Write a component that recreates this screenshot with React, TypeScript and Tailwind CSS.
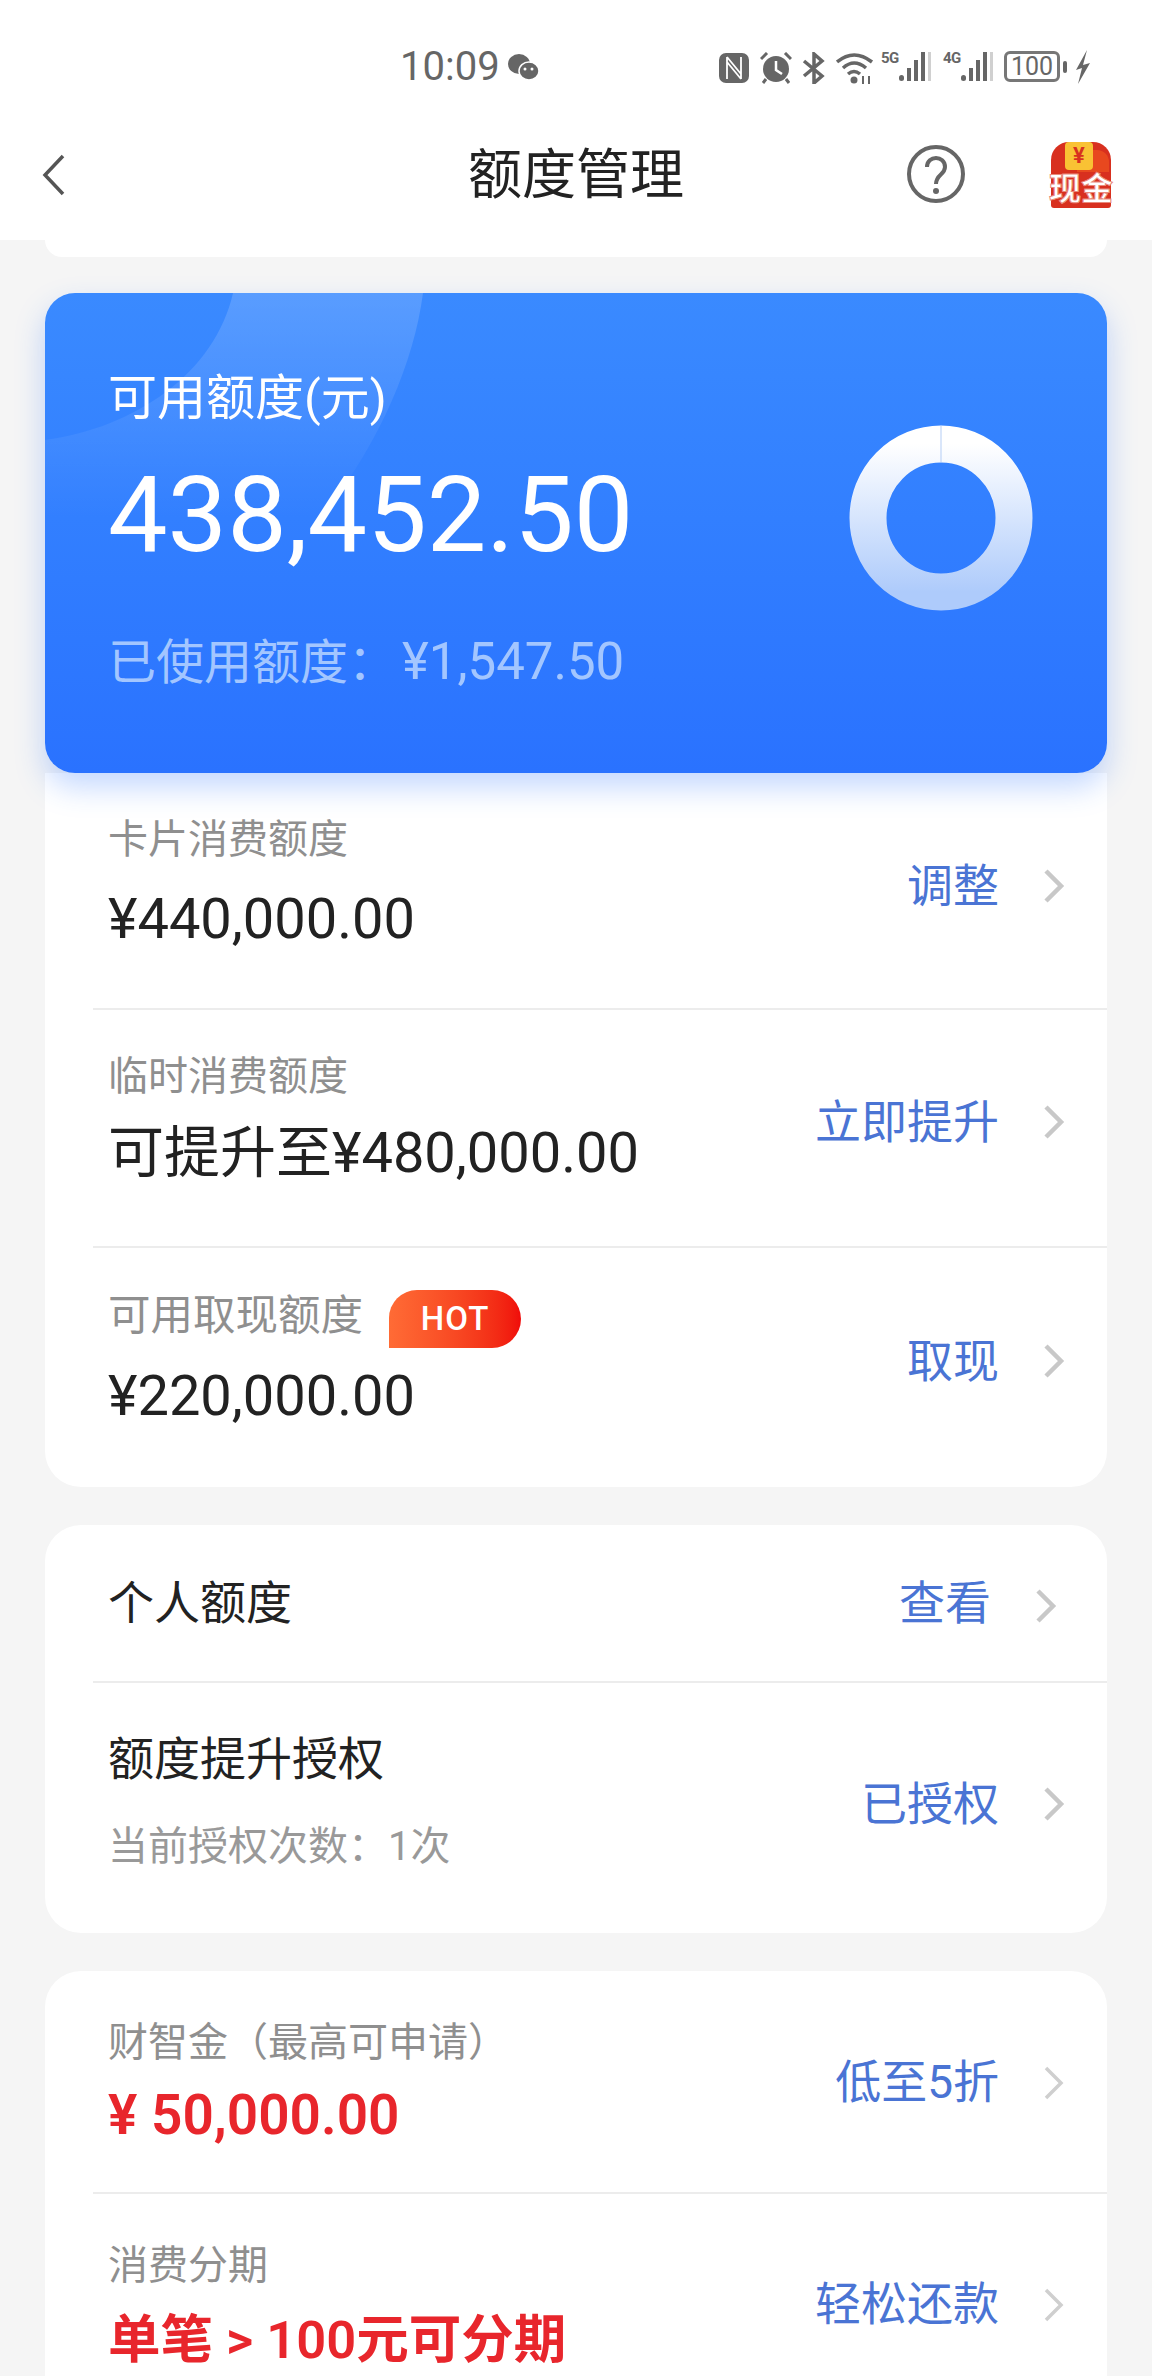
import React from "react";

const cjk = { fontFamily: '"Roboto","Noto Sans CJK SC",sans-serif' };

function Chevron({ className = "", thin }: { className?: string; thin?: boolean }) {
  return (
    <svg viewBox="0 0 22 34" className={"w-[22px] h-[34px] " + className} fill="none">
      <path d="M3 2 L18 17 L3 32" stroke={thin ? "#cfcfcf" : "#c8c8c8"} strokeWidth={thin ? 3.5 : 4.5} />
    </svg>
  );
}

function Action({ text, chevronClass = "mr-[42px]", wrap = "", thin }: { text: string; chevronClass?: string; wrap?: string; thin?: boolean }) {
  return (
    <div className={"flex items-center shrink-0 " + wrap}>
      <span className="text-[46px] leading-[60px] text-[#4a74d4]">{text}</span>
      <Chevron thin={thin} className={"ml-[44px] " + chevronClass} />
    </div>
  );
}

function Divider() {
  return <div className="h-[2px] ml-[48px] bg-[#ececec]" />;
}

type RowProps = {
  label: string;
  value: string;
  action: string;
  hot?: boolean;
  height: string;
  pt: string;
  valueClass: string;
  labelClass?: string;
  actionWrap?: string;
  thin?: boolean;
};

function Row({ label, value, action, hot, height, pt, valueClass, labelClass = "text-[40px]", actionWrap = "", thin }: RowProps) {
  return (
    <div className={"flex items-center justify-between pl-[63px] " + height}>
      <div className={"flex flex-col self-start " + pt}>
        <div className="flex items-center h-[50px]">
          <span className={"leading-[50px] text-[#8f8f8f] " + labelClass}>{label}</span>
          {hot && (
            <span className="ml-[26px] mt-[5px] w-[132px] h-[58px] rounded-tl-[28px] rounded-r-[29px] bg-gradient-to-r from-[#ff6b35] to-[#f00a0a] text-white text-[33px] font-medium flex items-center justify-center tracking-[1px]">
              HOT
            </span>
          )}
        </div>
        <span className={"leading-[64px] " + valueClass}>{value}</span>
      </div>
      <Action text={action} wrap={actionWrap} thin={thin} chevronClass={thin ? "mr-[42px] mt-[2px]" : "mr-[42px]"} />
    </div>
  );
}

function SignalIcon({ label, className }: { label: string; className: string }) {
  return (
    <div className={"relative w-[50px] h-[32px] " + className}>
      <span className="absolute left-0 top-0 text-[15px] leading-[15px] font-bold text-[#666666] tracking-[-0.5px]">{label}</span>
      <svg viewBox="0 0 32 32" className="absolute left-[18px] top-0 w-[32px] h-[32px]">
        <rect x="0" y="24" width="5" height="6" rx="2.5" fill="#666" />
        <rect x="8" y="17" width="4" height="13" fill="#666" />
        <rect x="15" y="9" width="4" height="21" fill="#666" />
        <rect x="22" y="1" width="4" height="29" fill="#666" />
        <rect x="29" y="1" width="3" height="29" fill="#d0d0d0" />
      </svg>
    </div>
  );
}

function StatusIcons() {
  return (
    <div className="absolute left-[719px] top-[51px] flex items-start text-[#666666]">
      <svg viewBox="0 0 30 30" className="w-[30px] h-[30px] mt-[2px]">
        <rect width="30" height="30" rx="7" fill="#666" />
        <path d="M8 4 V26 M22 4 V26 M8 9 L22 26 M8 4 L22 21" stroke="#fff" strokeWidth="1.8" fill="none" />
      </svg>
      <svg viewBox="0 0 32 32" className="w-[32px] h-[32px] ml-[11px] mt-[1px]">
        <circle cx="16" cy="17" r="13" fill="#666" />
        <path d="M16 9 V18 L22 22" stroke="#fff" strokeWidth="2.5" fill="none" />
        <path d="M1 7 L7 1 M31 7 L25 1 M6 27 L3 31 M26 27 L29 31" stroke="#666" strokeWidth="3" />
      </svg>
      <svg viewBox="0 0 24 32" className="w-[24px] h-[32px] ml-[10px] mt-[1px]">
        <path d="M2 9 L20 24 L12 31 V2 L20 9 L2 24" stroke="#666" strokeWidth="3.5" fill="none" />
      </svg>
      <svg viewBox="0 0 38 32" className="w-[38px] h-[32px] ml-[10px] mt-[1px]">
        <path d="M1 10 Q18 -4 36 10 M7 16 Q18 6 30 16 M12 22 Q18 17 24 22" stroke="#666" strokeWidth="3.5" fill="none" />
        <circle cx="18" cy="28" r="3.5" fill="#666" />
        <path d="M27 24 V32 M33 24 V32" stroke="#666" strokeWidth="2" />
      </svg>
      <SignalIcon label="5G" className="ml-[7px]" />
      <SignalIcon label="4G" className="ml-[12px]" />
      <div className="ml-[11px] w-[56px] h-[31px] rounded-[6px] border-[3px] border-[#777777] flex items-center justify-center text-[25px] leading-none text-[#666666]">
        100
      </div>
      <div className="ml-[3px] mt-[10px] w-[4px] h-[12px] rounded-[2px] bg-[#666666]" />
      <svg viewBox="0 0 16 34" className="w-[16px] h-[34px] ml-[8px] -mt-[1px]">
        <path d="M12 0 L1 20 L7 18 L3 34 L15 13 L8 15 Z" fill="#666" />
      </svg>
    </div>
  );
}

export default function App() {
  const plain = "text-[56px] text-[#222222]";
  return (
    <div className="relative w-[1152px] h-[2376px] overflow-hidden bg-[#f5f5f5]" style={cjk}>
      <header className="relative h-[240px] bg-white">
        <div className="absolute left-[400px] top-[44px] text-[40px] leading-[46px] text-[#666666]">10:09</div>
        <svg viewBox="0 0 32 28" className="absolute left-[507px] top-[53px] w-[32px] h-[28px]">
          <ellipse cx="12" cy="11" rx="11" ry="10" fill="#666" />
          <ellipse cx="22" cy="18" rx="10" ry="9" fill="#666" stroke="#fff" strokeWidth="1.5" />
          <circle cx="18" cy="16" r="1.5" fill="#fff" />
          <circle cx="25" cy="16" r="1.5" fill="#fff" />
        </svg>
        <StatusIcons />
        <svg viewBox="0 0 24 42" className="absolute left-[42px] top-[154px] w-[24px] h-[42px]" fill="none">
          <path d="M21 2 L3 21 L21 40" stroke="#555555" strokeWidth="3.5" />
        </svg>
        <h1 className="absolute left-0 right-0 top-[141px] text-center text-[54px] leading-[70px] font-normal text-[#222222]">额度管理</h1>
        <svg viewBox="0 0 58 58" className="absolute left-[907px] top-[145px] w-[58px] h-[58px]" fill="none">
          <circle cx="29" cy="29" r="27" stroke="#666666" strokeWidth="4" />
          <path d="M20 22 C20 10 38 10 38 22 C38 30 29 29 29 39" stroke="#666666" strokeWidth="4" />
          <circle cx="29" cy="46" r="3" fill="#666666" />
        </svg>
        <div className="absolute left-[1047px] top-[140px] w-[68px] h-[68px]">
          <div className="absolute left-[4px] top-[2px] w-[60px] h-[66px] rounded-t-[18px] rounded-b-[3px] bg-[#d8301f]" />
          <div className="absolute left-[30px] top-[10px] w-[32px] h-[22px] rounded-tr-[12px] bg-[#e8481f]" />
          <div className="absolute left-[18px] top-[2px] w-[28px] h-[28px] rounded-[4px] bg-[#f9c234] text-[#d8301f] text-[22px] leading-[28px] text-center font-bold">¥</div>
          <div className="absolute left-0 right-0 top-[30px] text-center text-[32px] leading-[38px] font-bold text-white whitespace-nowrap [-webkit-text-stroke:1px_#e88a7c]">现金</div>
        </div>
      </header>

      <main className="px-[45px]">
        <div className="h-[17px] rounded-b-[30px] bg-white" />

        <section className="relative z-10 mt-[36px] h-[480px] rounded-[30px] overflow-hidden bg-gradient-to-b from-[#3a8aff] to-[#2a72ff] text-white pl-[63px] shadow-[0_14px_30px_rgba(42,114,255,0.28)]">
          <svg viewBox="0 0 400 300" className="absolute left-0 top-0 w-[400px] h-[300px]">
            <defs>
              <linearGradient id="glow" x1="0" y1="0" x2="0" y2="1">
                <stop offset="0" stopColor="#ffffff" stopOpacity="0.16" />
                <stop offset="0.75" stopColor="#ffffff" stopOpacity="0" />
              </linearGradient>
            </defs>
            <path d="M188 0 C170 80 90 135 0 147 L0 300 L200 300 C300 220 365 100 378 0 Z" fill="url(#glow)" />
          </svg>
          <div className="relative pt-[76px] text-[49px] leading-[60px]">可用额度(元)</div>
          <div className="relative mt-[26px] text-[106px] leading-[120px]">438,452.50</div>
          <div className="relative mt-[57px] text-[48px] leading-[60px] text-[#a3c6ff]">
            已使用额度：<span className="ml-[6px] text-[51px]">¥1,547.50</span>
          </div>
          <svg viewBox="0 0 186 188" className="absolute left-[803px] top-[131px] w-[186px] h-[188px]">
            <defs>
              <linearGradient id="ring" x1="0" y1="0" x2="0" y2="1">
                <stop offset="0" stopColor="#ffffff" />
                <stop offset="1" stopColor="#aecbfb" />
              </linearGradient>
            </defs>
            <ellipse cx="93" cy="94" rx="73" ry="74" fill="none" stroke="url(#ring)" strokeWidth="37" />
            <path d="M93 2 V38" stroke="#b4cdf5" strokeWidth="1" />
          </svg>
        </section>

        <section className="rounded-b-[36px] bg-white">
          <Row label="卡片消费额度" value="¥440,000.00" action="调整" height="h-[235px]" pt="pt-[42px]" valueClass={"mt-[22px] " + plain} actionWrap="pb-[10px]" />
          <Divider />
          <Row label="临时消费额度" value="可提升至¥480,000.00" action="立即提升" height="h-[236px]" pt="pt-[42px]" valueClass={"mt-[19px] " + plain} actionWrap="pb-[12px]" />
          <Divider />
          <Row label="可用取现额度" labelClass="text-[42.5px]" value="¥220,000.00" action="取现" hot height="h-[239px]" pt="pt-[43px]" valueClass={"mt-[23px] " + plain} actionWrap="pb-[14px]" />
        </section>

        <section className="mt-[38px] rounded-[36px] bg-white">
          <div className="flex items-center justify-between pl-[63px] h-[156px]">
            <span className="text-[46px] leading-[60px] text-[#222222]">个人额度</span>
            <div className="flex items-center shrink-0">
              <span className="text-[46px] leading-[60px] text-[#4a74d4]">查看</span>
              <Chevron className="ml-[44px] mr-[50px] mt-[5px]" />
            </div>
          </div>
          <Divider />
          <div className="flex items-center justify-between pl-[63px] h-[250px]">
            <div className="flex flex-col pb-[16px]">
              <span className="text-[46px] leading-[60px] text-[#222222]">额度提升授权</span>
              <span className="mt-[33px] text-[40px] leading-[50px] text-[#999999]">当前授权次数：1次</span>
            </div>
            <Action text="已授权" wrap="pb-[8px]" />
          </div>
        </section>

        <section className="mt-[38px] rounded-t-[36px] bg-white">
          <Row label="财智金（最高可申请）" value="¥ 50,000.00" action="低至5折" height="h-[221px]" pt="pt-[47px]" valueClass="mt-[15px] text-[55px] font-semibold text-[#e8262c]" thin />
          <Divider />
          <Row label="消费分期" value="单笔 > 100元可分期" action="轻松还款" height="h-[220px]" pt="pt-[47px]" valueClass="mt-[17px] text-[52.5px] font-semibold text-[#e8262c]" thin />
        </section>
      </main>
    </div>
  );
}
